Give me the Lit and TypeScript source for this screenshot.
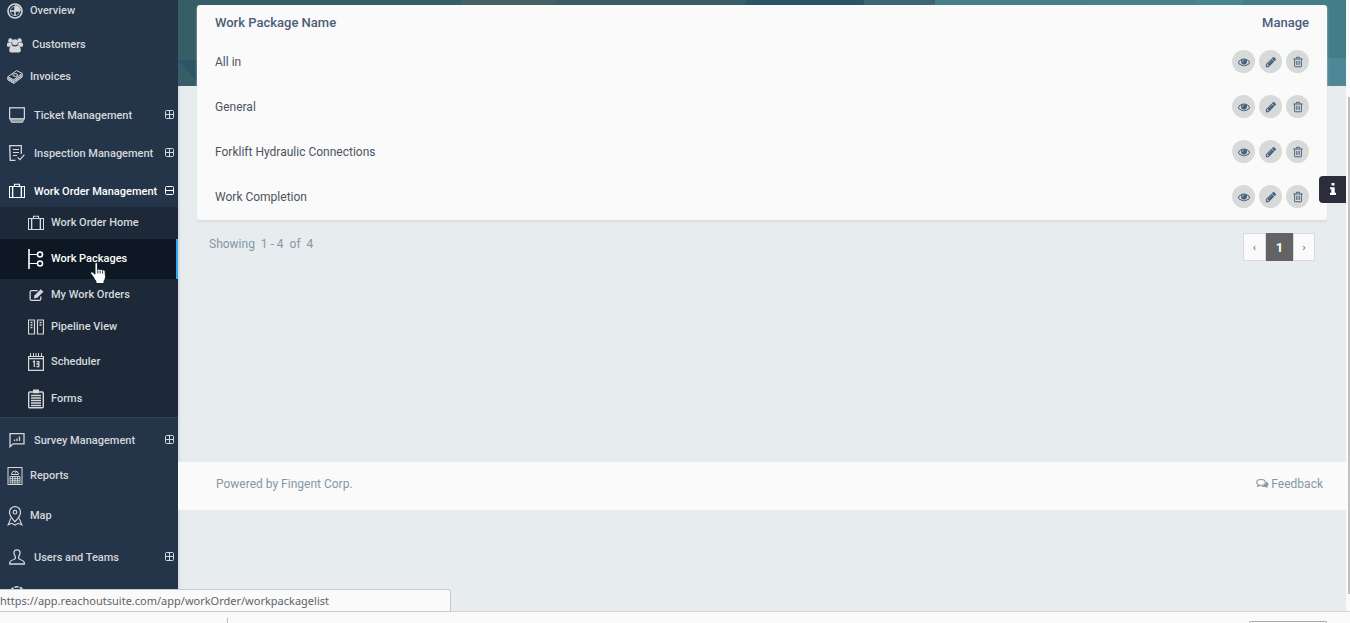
import { LitElement, html, svg, css, nothing, TemplateResult, SVGTemplateResult } from "lit";
import { customElement, state } from "lit/decorators.js";
import { classMap } from "lit/directives/class-map.js";

type Glyph = { box: string; art: SVGTemplateResult };

const EYE = "M1664 960q-152-236-381-353 61 104 61 225 0 185-131.5 316.5t-316.5 131.5-316.5-131.5-131.5-316.5q0-121 61-225-229 117-381 353 133 205 333.5 326.5t434.5 121.5 434.5-121.5 333.5-326.5zm-720-384q0-20-14-34t-34-14q-125 0-214.5 89.5t-89.5 214.5q0 20 14 34t34 14 34-14 14-34q0-86 61-147t147-61q20 0 34-14t14-34zm848 384q0 34-20 69-140 230-376.5 368.5t-499.5 138.5-499.5-139-376.5-368q-20-35-20-69t20-69q140-229 376.5-368t499.5-139 499.5 139 376.5 368q20 35 20 69z";
const PENCIL = "M491 1536l91-91-235-235-91 91v107h128v128h107zm523-928q0-22-22-22-10 0-17 7l-542 542q-7 7-7 17 0 22 22 22 10 0 17-7l542-542q7-7 7-17zm-54-192l416 416-832 832h-416v-416zm683 96q0 53-37 90l-166 166-416-416 166-165q36-38 90-38 53 0 91 38l235 234q37 39 37 91z";
const TRASH = "M704 736v576q0 14-9 23t-23 9h-64q-14 0-23-9t-9-23v-576q0-14 9-23t23-9h64q14 0 23 9t9 23zm256 0v576q0 14-9 23t-23 9h-64q-14 0-23-9t-9-23v-576q0-14 9-23t23-9h64q14 0 23 9t9 23zm256 0v576q0 14-9 23t-23 9h-64q-14 0-23-9t-9-23v-576q0-14 9-23t23-9h64q14 0 23 9t9 23zm128 724v-948h-896v948q0 22 7 40.5t14.5 27 10.5 8.5h832q3 0 10.5-8.5t14.5-27 7-40.5zm-672-1076h448l-48-117q-7-9-17-11h-317q-10 2-17 11zm928 32v64q0 14-9 23t-23 9h-96v948q0 83-47 143.5t-113 60.5h-832q-66 0-113-58.5t-47-141.5v-952h-96q-14 0-23-9t-9-23v-64q0-14 9-23t23-9h309l70-167q15-37 54-63t79-26h320q40 0 79 26t54 63l70 167h309q14 0 23 9t9 23z";

const line = (art: SVGTemplateResult) => svg`<g fill="none" stroke="currentColor">${art}</g>`;

const GLYPHS: Record<string, Glyph> = {
  overview: {
    box: "0 0 16 16",
    art: svg`<circle cx="8" cy="8" r="7" fill="none" stroke="currentColor" stroke-width="1.6"/><path d="M8 3v10M3 8h10" stroke="currentColor" stroke-width="1.5"/><path d="M8 8V2a6 6 0 0 1 6 6z" fill="currentColor"/><circle cx="8" cy="8" r="4.6" fill="none" stroke="currentColor" stroke-width=".7"/>`,
  },
  customers: {
    box: "0 0 16 16",
    art: svg`<g fill="currentColor"><circle cx="3.4" cy="3.4" r="2.2"/><circle cx="12.6" cy="3.4" r="2.2"/><circle cx="8" cy="5.2" r="3"/><path d="M0 9V7.2Q0 5.6 1.4 5.6h3q.2 2 1.2 2.8-1.8 0-2.4 1.4H1Q0 9.800 0 9zM16 9V7.2q0-1.600-1.400-1.600h-3q-.2 2-1.200 2.800 1.800 0 2.400 1.400H15q1 0 1-.8z"/><path d="M2.200 13.400q0-4.800 3-5Q8 10.400 10.800 8.400q3 .2 3 5 0 2-2 2H4.200q-2 0-2-2z"/></g>`,
  },
  invoices: {
    box: "0 0 16 16",
    art: line(svg`<path d="M.8 7.800 9.600 1.600l5.600 2.800-8.400 6.400zM.8 7.800v3l6 3.600 8.400-6.400v-3.400M.8 9.400l6 3.200 8.400-6.200M6.800 10.800v3.400M2.800 9v3M4.800 10v3M9 9v3.400M11 7.600V11M13.200 6v3.200"/><ellipse cx="8.200" cy="6" rx="2.400" ry="1.400"/>`),
  },
  ticket: {
    box: "0 0 16 16",
    art: svg`<rect x=".6" y=".8" width="14.800" height="11" fill="none" stroke="currentColor" stroke-width="1.300"/><path d="M1 12h14l-1.200 3.400H2.200z" fill="currentColor" opacity=".6"/><path d="M1.500 12.500l1 2.700h11l1-2.700" fill="none" stroke="currentColor"/>`,
  },
  inspection: {
    box: "0 0 16 16",
    art: svg`<path d="M6.500 15.300H1.200L.7.700h11.600v8.400" fill="none" stroke="currentColor" stroke-width="1.300"/><path d="M4 4.500h6M4 7.500h6M4 10.500h4M8.600 12.400l2.400 2.200 4.400-5" fill="none" stroke="currentColor" stroke-width="1.200"/>`,
  },
  briefcase: {
    box: "0 0 16 16",
    art: line(svg`<path d="M.5 3.500h15v11H.5zM5.500 3V1.200h5V3M3.500 3.500v11M12.500 3.500v11" stroke-width="1.100"/><path d="M4.500 3.500v11M11.500 3.500v11" opacity=".3"/>`),
  },
  packages: {
    box: "0 0 16 20",
    art: svg`<path d="M1 0v20" stroke="currentColor" stroke-width="1.600"/><path d="M1 5.500h8M1 14.500h8" stroke="currentColor" stroke-width="1.200"/><g fill="none" stroke="currentColor" stroke-width="1.500"><circle cx="12" cy="5.500" r="2.500"/><circle cx="12" cy="14.500" r="2.500"/></g>`,
  },
  edit: {
    box: "-1 0 15 12",
    art: svg`<path d="M11 7.500v2q0 1.500-1.500 1.500h-7Q1 11 1 9.500v-6Q1 2 2.500 2H8" fill="none" stroke="currentColor" stroke-width="1.200"/><path d="M4.600 9l.4-2.600L11 .5 13.500 3 7.400 8.800z" fill="currentColor"/>`,
  },
  pipeline: {
    box: "0 0 16 16",
    art: svg`<g fill="none" stroke="currentColor"><path d="M.5 1h6v14h-6zM9.500 1h6v14h-6z" stroke-width="1.200"/><path d="M2.500 3.500h2M2.500 6h2M2.500 8.500h2M11.500 3.500h2M11.500 6h2" stroke-width="1.300"/></g>`,
  },
  scheduler: {
    box: "0 0 16 18",
    art: svg`<path d="M.6 3.500h14.800v13.800H.6zM.6 5.600h14.800" fill="none" stroke="currentColor" stroke-width="1.200"/><path d="M2.500 0v3M5.500 0v3M8 0v3M10.500 0v3M13.500 0v3" stroke="currentColor" stroke-width="1"/><path d="M4.800 9l1.500-.8V14M8.400 8.600h2.400v5H8.400M8.400 11h2.400" fill="none" stroke="currentColor" stroke-width="1.300"/>`,
  },
  forms: {
    box: "0 0 16 19",
    art: svg`<rect x=".7" y="2.500" width="14.600" height="15.800" rx="1" fill="none" stroke="currentColor" stroke-width="1.400"/><path d="M5 0h6v3.800H5z" fill="currentColor"/><path d="M3 6h10M3 8.500h10M3 11h10M3 13.500h10M3 16h10" stroke="currentColor" stroke-width="1.300"/>`,
  },
  survey: {
    box: "0 0 16 16",
    art: svg`<path d="M1 14.800V1.600h14v10.200H4.200z" fill="none" stroke="currentColor" stroke-width="1.300"/><path d="M5.500 9V7.500M8 9V6.500M10.500 9V4.500" stroke="currentColor" stroke-width="1.300"/>`,
  },
  reports: {
    box: "0 0 16 18",
    art: svg`<rect x="1" y=".5" width="14" height="17" fill="none" stroke="currentColor"/><path d="M4.500 7.500a3.500 3.500 0 1 1 7 0z" fill="none" stroke="currentColor"/><path d="M8 6.500l1.500-2" stroke="currentColor"/><path d="M3 9.500h10v6.500H3zM3 11.700h10M3 13.800h10M5.500 9.500V16M8 9.500V16M10.500 9.500V16" fill="none" stroke="currentColor" stroke-width=".9"/>`,
  },
  map: {
    box: "0 0 16 21",
    art: line(svg`<path d="M8 16.500Q2.200 10.500 2.200 6.500a5.800 5.800 0 0 1 11.600 0q0 4-5.800 10z" stroke-width="1.300"/><circle cx="8" cy="6.500" r="1.900" stroke-width="1.200"/><path d="M3.600 13L.8 19.800l3.600-1.600L8 20l3.600-1.800 3.600 1.600L12.400 13" stroke-width="1.200"/>`),
  },
  user: {
    box: "0 0 16 16",
    art: line(svg`<path d="M6.300 7.400Q5 6 5 3.800 5 .8 8 .8t3 3q0 2.200-1.300 3.600v1.800q0 .8 1.500 1.300 3.500 1 4.100 2.900v1.600H.7v-1.600q.6-1.900 4.100-2.900 1.500-.5 1.500-1.300z" stroke-width="1.300"/>`),
  },
  gear: {
    box: "0 0 16 16",
    art: line(svg`<circle cx="8" cy="8" r="7.200" stroke-width="1.500" stroke-dasharray="4 1.200"/><circle cx="8" cy="8" r="2.500"/>`),
  },
  plus: { box: "0 0 9 9", art: line(svg`<rect x=".5" y=".5" width="8" height="8" rx="1"/><path d="M4.500 1v7M1 4.500h7"/>`) },
  minus: { box: "0 0 9 9", art: line(svg`<rect x=".5" y=".5" width="8" height="8" rx="1"/><path d="M1 4.500h7"/>`) },
  eye: { box: "0 0 1792 1792", art: svg`<path d=${EYE} fill="currentColor"/>` },
  pencil: { box: "0 0 1792 1792", art: svg`<path d=${PENCIL} fill="currentColor"/>` },
  trash: { box: "0 0 1792 1792", art: svg`<path d=${TRASH} fill="currentColor"/>` },
  comments: {
    box: "0 0 13 12",
    art: svg`<path d="M5 1.500c2.400 0 4.300 1.200 4.300 2.900S7.400 7.300 5 7.300q-.5 0-1-.1-1 .8-2.200.9.600-.6.700-1.400Q.7 5.800.7 4.400.7 1.500 5 1.500z" fill="none" stroke="currentColor" stroke-width="1.100"/><path d="M10.500 3.500q2 1 2 2.700 0 1.300-1.400 2.200.1.900.9 1.500-1.300 0-2.400-1-2.600.5-4.200-.7 4.800-.4 5.100-4.700z" fill="currentColor"/>`,
  },
  info: { box: "0 0 8 12", art: svg`<path d="M2.500 0h3v2.500h-3zM1 4.200h4.700v5.600H7V12H1V9.800h1.300V6.300H1z" fill="currentColor"/>` },
  hand: {
    box: "0 0 17 22",
    art: svg`<path d="M5 1.800Q5 .5 6.200.5T7.500 1.800v6q.3-.8 1.300-.8t1.300 1q.3-.6 1.200-.6 1 0 1.200 1 .3-.5 1.100-.5 1.500 0 1.500 1.700l.4 5q0 3-1.500 4.400v2.500H6v-2Q4.500 17.500 3 14.500L.8 11.700q-.6-1.200.4-1.700 1-.4 2 .6L5 12.300z" fill="#fff" stroke="#0d1824" stroke-width=".9"/><path d="M7.800 8.200v3.300M10.200 8.500v3M12.600 9.200v2.500" stroke="#0d1824" stroke-width=".9"/>`,
  },
};

const glyph = (name: string, cls: string): TemplateResult =>
  html`<svg class=${cls} viewBox=${GLYPHS[name].box} aria-hidden="true">${GLYPHS[name].art}</svg>`;

interface Item {
  label: string;
  icon: string;
  size: string;
  toggle?: "plus" | "minus";
  wide?: boolean;
  current?: boolean;
  children?: Item[];
}

const MENU: Item[] = [
  { label: "Overview", icon: "overview", size: "m" },
  { label: "Customers", icon: "customers", size: "s", wide: true },
  { label: "Invoices", icon: "invoices", size: "s" },
  { label: "Ticket Management", icon: "ticket", size: "first", toggle: "plus" },
  { label: "Inspection Management", icon: "inspection", size: "l", toggle: "plus" },
  {
    label: "Work Order Management", icon: "briefcase", size: "open", toggle: "minus",
    children: [
      { label: "Work Order Home", icon: "briefcase", size: "s" },
      { label: "Work Packages", icon: "packages", size: "current", current: true },
      { label: "My Work Orders", icon: "edit", size: "s" },
      { label: "Pipeline View", icon: "pipeline", size: "s" },
      { label: "Scheduler", icon: "scheduler", size: "l" },
      { label: "Forms", icon: "forms", size: "m" },
    ],
  },
  { label: "Survey Management", icon: "survey", size: "first", toggle: "plus" },
  { label: "Reports", icon: "reports", size: "s" },
  { label: "Map", icon: "map", size: "xl" },
  { label: "Users and Teams", icon: "user", size: "m", toggle: "plus" },
  { label: "Settings", icon: "gear", size: "l", toggle: "plus" },
];

@customElement("side-menu")
class SideMenu extends LitElement {
  static styles = css`
    :host { display: block; background: #243449; color: #d5d8db; overflow: hidden; }
    ul { list-style: none; margin: 0; padding: 0; }
    .root { margin-top: -7px; }
    .link { display: flex; align-items: center; gap: 7px; box-sizing: border-box; padding: 0 4px 0 7px; color: inherit; text-decoration: none; font-size: 11px; line-height: 16px; font-weight: 500; white-space: nowrap; }
    .group { gap: 9px; padding-left: 9px; }
    .group .icon { margin-bottom: 2px; }
    .wide { gap: 9px; }
    .s { height: 32px; }
    .m { height: 36px; }
    .l { height: 38px; }
    .xl { height: 48px; }
    .first { height: 42px; padding-top: 4px; }
    .open { height: 34px; padding-top: 4px; color: #fff; }
    .label { flex: 1; min-width: 0; }
    .icon { width: 16px; height: 20px; flex: none; }
    .toggle { width: 9px; height: 9px; margin-bottom: 4px; flex: none; }
    .group .label { margin-right: -9px; }
    .sub { background: #1d2938; border-bottom: 1px solid #35434f; }
    .sub .link { padding-left: 28px; }
    .sub .current { height: 40px; background: #0d1824; color: #fff; border-right: 2px solid #31a9ee; }
  `;

  private row(item: Item): TemplateResult {
    const cls = { link: true, [item.size]: true, group: !!item.toggle, wide: !!item.wide };
    return html`<li>
      <a class=${classMap(cls)} href="#" aria-current=${item.current ? "page" : nothing}>
        ${glyph(item.icon, "icon")}<span class="label">${item.label}</span>${item.toggle ? glyph(item.toggle, "toggle") : nothing}
      </a>
      ${item.children ? html`<ul class="sub">${item.children.map((c) => this.row(c))}</ul>` : nothing}
    </li>`;
  }

  render() {
    return html`<nav aria-label="Main"><ul class="root">${MENU.map((i) => this.row(i))}</ul></nav>`;
  }
}

@customElement("package-table")
class PackageTable extends LitElement {
  static styles = css`
    :host { display: block; background: #fafafa; border-radius: 3px; box-shadow: 0 2px 2px #d8dddf; }
    table { width: 100%; border-collapse: collapse; }
    th, td { box-sizing: border-box; text-align: left; }
    td { height: 45px; padding: 0 18px 2px; font-size: 12px; line-height: 16px; color: #4d545e; }
    th { height: 35px; padding: 0 18px; font-size: 13px; line-height: 16px; font-weight: 500; color: #4b5d78; }
    th:last-child { text-align: right; }
    .actions { display: flex; justify-content: flex-end; gap: 4px; }
    .round { width: 23px; height: 23px; border: 0; border-radius: 50%; padding: 0; background: #d8dad9; color: #46607f; display: grid; place-items: center; }
    .glyph { width: 12px; height: 12px; }
  `;
  @state() private names = ["All in", "General", "Forklift Hydraulic Connections", "Work Completion"];

  render() {
    return html`<table>
      <thead><tr><th scope="col">Work Package Name</th><th scope="col">Manage</th></tr></thead>
      <tbody>
        ${this.names.map((n) => html`<tr>
          <td>${n}</td>
          <td><div class="actions">
            <button class="round" aria-label="View">${glyph("eye", "glyph")}</button>
            <button class="round" aria-label="Edit">${glyph("pencil", "glyph")}</button>
            <button class="round" aria-label="Delete">${glyph("trash", "glyph")}</button>
          </div></td>
        </tr>`)}
      </tbody>
    </table>`;
  }
}

@customElement("app-root")
class AppRoot extends LitElement {
  static styles = css`
    :host { display: flex; flex-direction: column; height: 100vh; position: relative; overflow: hidden; background: #fafafa; font-family: Roboto, "Liberation Sans", sans-serif; }
    .window { flex: 1; min-height: 0; display: grid; grid-template-columns: 178px 1fr 4px; }
    .page {
      min-width: 0; overflow: hidden; background-color: #e7ecee; background-repeat: no-repeat;
      background-image:
        linear-gradient(to right, #d5d9da, transparent),
        linear-gradient(to top right, transparent 50%, #2b5566 50%),
        linear-gradient(#4f8796, #4f8796),
        linear-gradient(100deg, #375d67 0 10%, #35606a 10% 24%, #466066 24% 32%, #395c66 32% 48%, #2b5566 48% 58%, #3d6673 58% 64%, #477f88 64% 77%, #47818f 77% 86%, #488692 86% 90%, #437e88 90%);
      background-size: 3px 100%, 19px 22px, 19px 28px, 100% 86px;
      background-position: 0 86px, 0 60px, 100% 58px, 0 0;
    }
    .content { box-sizing: border-box; min-height: calc(100vh - 161px); padding: 5px 19px 0; }
    .below { display: flex; justify-content: space-between; align-items: flex-start; padding: 13px 12px 0; }
    .count { margin: 0; font-size: 12px; line-height: 22px; color: #8497a5; white-space: pre; }
    .pager { display: flex; }
    .step { box-sizing: border-box; width: 23px; height: 28px; padding: 0; border: 1px solid #d9dbdc; background: #fafafa; color: #4a7196; font: 11px Roboto, sans-serif; }
    .step.on { width: 27px; border-color: #636363; background: #636363; color: #fff; font-size: 13px; font-weight: 700; }
    .step.last { width: 22px; }
    .foot { display: flex; justify-content: space-between; align-items: center; box-sizing: border-box; height: 48px; padding: 0 23px 4px 38px; background: #fafafa; font-size: 12px; line-height: 16px; color: #8497a5; }
    .feedback { display: flex; align-items: center; gap: 2px; color: inherit; text-decoration: none; }
    .talk { width: 13px; height: 12px; }
    .track { display: flex; flex-direction: column; align-items: flex-end; padding: 97px 0 17px; }
    .thumb { flex: 1; width: 2px; background: #c1c1c1; }
    .shelf { display: flex; align-items: flex-end; justify-content: space-between; box-sizing: border-box; height: 12px; padding: 0 23px 0 227px; border-top: 1px solid #d3d6d7; }
    .split { width: 1px; height: 5px; background: #bcbcbc; }
    .showall { width: 76px; height: 1px; border: 1px solid #aaa; border-bottom: 0; border-radius: 2px 2px 0 0; }
    .info { position: absolute; right: 4px; top: 176px; width: 27px; height: 27px; border: 0; padding: 0; border-radius: 4px 0 0 4px; background: #2b2d3b; color: #fff; display: grid; place-items: center; }
    .info-mark { width: 8px; height: 12px; margin-bottom: 2px; }
    .status { position: absolute; left: 0; bottom: 11px; box-sizing: border-box; width: 451px; height: 23px; border: 1px solid #c8cacb; border-left: 0; border-radius: 0 4px 0 0; background: #fafafa; color: #5f6368; font: 11px/22px "Noto Sans", "Open Sans", sans-serif; }
    .pointer { position: absolute; left: 90px; top: 262px; width: 17px; height: 22px; }
  `;

  render() {
    return html`
      <div class="window">
        <side-menu></side-menu>
        <main class="page">
          <section class="content">
            <package-table></package-table>
            <div class="below">
              <p class="count">Showing  1 - 4  of  4</p>
              <div class="pager">
                <button class="step" aria-label="Previous">‹</button>
                <button class="step on" aria-current="page">1</button>
                <button class="step last" aria-label="Next">›</button>
              </div>
            </div>
          </section>
          <footer class="foot">
            <span>Powered by Fingent Corp.</span>
            <a class="feedback" href="#">${glyph("comments", "talk")}Feedback</a>
          </footer>
        </main>
        <div class="track"><div class="thumb"></div></div>
      </div>
      <div class="shelf"><div class="split"></div><div class="showall"></div></div>
      <button class="info" aria-label="Information">${glyph("info", "info-mark")}</button>
      ${glyph("hand", "pointer")}
      <div class="status">https://app.reachoutsuite.com/app/workOrder/workpackagelist</div>
    `;
  }
}
